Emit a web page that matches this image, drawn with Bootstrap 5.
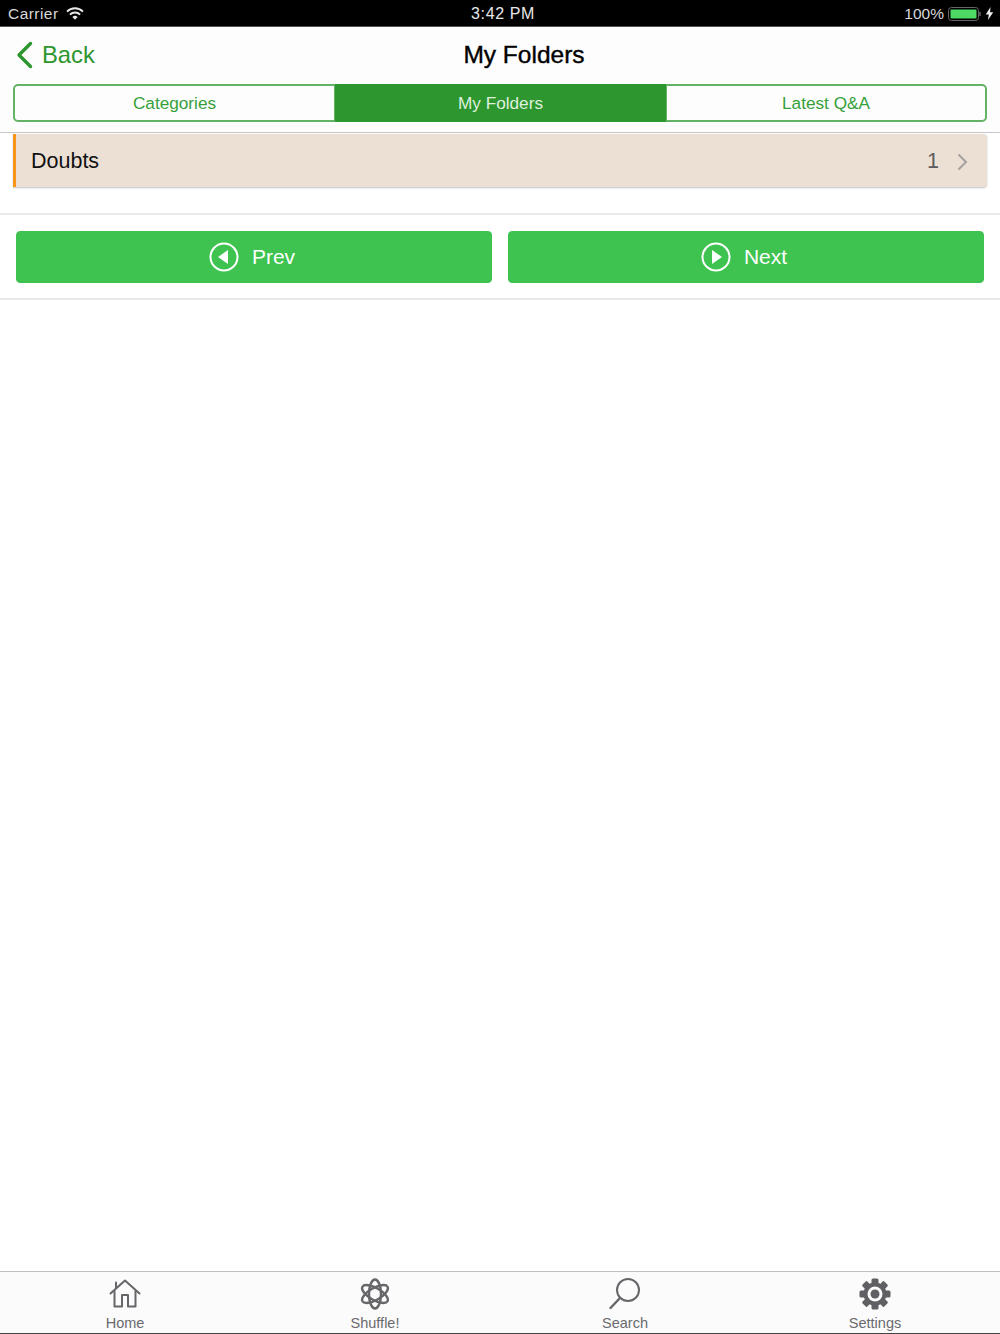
<!DOCTYPE html>
<html lang="en">
<head>
    <meta charset="UTF-8">
    <meta name="viewport" content="width=device-width, initial-scale=1.0">
    <title>My Folders</title>
    <link href="https://cdn.jsdelivr.net/npm/bootstrap@5.3.0/dist/css/bootstrap.min.css" rel="stylesheet">
    <style>
        body {
            font-family: "Liberation Sans", Arial, sans-serif;
            height: 1334px;
            background: #fff;
            overflow: hidden;
        }
        .status-bar {
            height: 27px;
            background: #000;
            color: #d8d8d8;
            font-size: 15.5px;
            padding: 1px 6px 0 8px;
            border-bottom: 1px solid #555;
        }
        .status-side { width: 300px; }
        .status-left { gap: 7px; }
        .status-carrier { letter-spacing: 0.45px; }
        .status-time { color: #e8e8e8; font-size: 16px; letter-spacing: 0.6px; margin-left: 4px; }
        .nav-head {
            height: 57px;
            background: #fdfdfd;
            padding-left: 16px;
        }
        .back-link {
            width: 190px;
            padding-bottom: 1px;
            color: #2e962f;
            font-size: 23.8px;
            text-decoration: none;
        }
        .head-title {
            width: 240px;
            margin-left: 198px;
            font-size: 24.5px;
            font-weight: 400;
            color: #000;
            -webkit-text-stroke: 0.4px #000;
        }
        .tab-wrap {
            padding: 0 13px 10px;
            height: 49px;
            background: #fdfdfd;
            border-bottom: 1px solid #c6c6cb;
        }
        .tab-group { width: 974px; height: 38px; }
        .tab-group .btn {
            --bs-btn-color: #35a03a;
            --bs-btn-border-color: #62b365;
            --bs-btn-border-width: 2px;
            --bs-btn-active-bg: #2e962f;
            --bs-btn-active-border-color: #2e962f;
            --bs-btn-active-color: #dff0df;
            --bs-btn-border-radius: 5px;
            padding-top: 8px;
            padding-bottom: 6px;
            font-size: 17.2px;
            line-height: 1;
            flex: none;
            display: flex;
            align-items: center;
            justify-content: center;
        }
        .tab-one { width: 323px; }
        .tab-two { width: 331px; }
        .tab-three { width: 322px; }
        .folder-zone {
            height: 82px;
            padding: 1px 13px 0 13px;
            border-bottom: 2px solid #e9e9ec;
        }
        .folder-row {
            height: 53px;
            background: #ece0d5;
            border-left: 3px solid #fb961a;
            border-radius: 0 4px 4px 0;
            box-shadow: 0 1px 2px #c4c0c8;
            padding: 2px 19px 0 15px;
            font-size: 21.5px;
            color: #111;
        }
        .folder-count { color: #5c5c60; margin-right: 18px; }
        .pager {
            height: 85px;
            padding: 16px 16px 0;
            gap: 16px;
            border-bottom: 2px solid #e9e9ec;
        }
        .pager .btn {
            --bs-btn-bg: #3ec350;
            --bs-btn-border-color: #3ec350;
            --bs-btn-color: #fff;
            --bs-btn-border-radius: 4px;
            height: 52px;
            flex: 1 1 0;
            padding-right: 16px;
            font-size: 21px;
            gap: 13px;
        }
        .tab-bar {
            height: 63px;
            background: #fbfbfb;
            border-top: 1px solid #bdbdc0;
            border-bottom: 1px solid #444;
        }
        .tab-item {
            width: 250px;
            color: #6a6a6e;
            font-size: 14.5px;
            line-height: 1;
            text-decoration: none;
        }
        .tab-item svg { display: block; margin-top: 6px; margin-bottom: 6px; }
    </style>
</head>
<body class="d-flex flex-column">
    <!-- status bar -->
    <div class="status-bar d-flex justify-content-between align-items-center">
        <div class="status-side status-left d-flex align-items-center">
            <span class="status-carrier">Carrier</span>
            <svg width="18" height="13" viewBox="0 0 18 13">
                <path d="M1 4.6a11.5 11.5 0 0 1 16 0" fill="none" stroke="#e8e8e8" stroke-width="2"/>
                <path d="M3.9 7.6a7.3 7.3 0 0 1 10.2 0" fill="none" stroke="#e8e8e8" stroke-width="2"/>
                <path d="M6.4 10a3.6 3.6 0 0 1 5.2 0L9 12.8z" fill="#e8e8e8"/>
            </svg>
        </div>
        <span class="status-time">3:42 PM</span>
        <div class="status-side d-flex align-items-center justify-content-end gap-1">
            <span>100%</span>
            <svg width="33" height="14" viewBox="0 0 33 14">
                <rect x="0.5" y="0.5" width="30" height="13" rx="3" fill="none" stroke="#666"/>
                <rect x="2.5" y="2.5" width="26" height="9" rx="1" fill="#4cd964"/>
                <path d="M32 5v4" stroke="#666" stroke-width="1.5"/>
            </svg>
            <svg width="9" height="13" viewBox="0 0 9 13"><path d="M5.5 0 0.8 7.4h3L3 13l5.2-7.8h-3.100z" fill="#eee"/></svg>
        </div>
    </div>

    <!-- nav -->
    <div class="nav-head d-flex align-items-center">
        <a class="back-link d-flex align-items-center gap-2" href="#">
            <svg width="18" height="28" viewBox="0 0 18 28"><path d="M14.500 2.500 3 14 14.500 25.500" fill="none" stroke="#2e962f" stroke-width="3.400" stroke-linecap="round" stroke-linejoin="round"/></svg>
            Back
        </a>
        <div class="head-title text-center">My Folders</div>
    </div>

    <div class="tab-wrap">
        <div class="btn-group tab-group" role="group">
            <button type="button" class="btn btn-outline-success tab-one">Categories</button>
            <button type="button" class="btn btn-outline-success tab-two active">My Folders</button>
            <button type="button" class="btn btn-outline-success tab-three">Latest Q&amp;A</button>
        </div>
    </div>

    <!-- folder list -->
    <div class="folder-zone">
        <div class="folder-row d-flex align-items-center">
            <span class="flex-grow-1">Doubts</span>
            <span class="folder-count">1</span>
            <svg width="11" height="18" viewBox="0 0 11 18"><path d="M1.500 1.500 9 9l-7.500 7.500" fill="none" stroke="#a3a09e" stroke-width="2"/></svg>
        </div>
    </div>

    <div class="pager d-flex">
        <button type="button" class="btn d-flex align-items-center justify-content-center">
            <svg width="30" height="30" viewBox="0 0 30 30"><circle cx="15" cy="15" r="13.500" fill="none" stroke="#fff" stroke-width="2"/><path d="M19 8v14L9 15z" fill="#fff"/></svg>
            Prev
        </button>
        <button type="button" class="btn d-flex align-items-center justify-content-center">
            <svg width="30" height="30" viewBox="0 0 30 30"><circle cx="15" cy="15" r="13.500" fill="none" stroke="#fff" stroke-width="2"/><path d="M11 8v14l10-7z" fill="#fff"/></svg>
            Next
        </button>
    </div>

    <div class="flex-grow-1"></div>

    <!-- bottom tabs -->
    <div class="tab-bar d-flex">
        <a class="tab-item d-flex flex-column align-items-center" href="#">
            <svg width="32" height="32" viewBox="0 0 32 32" fill="none" stroke="#66666a" stroke-width="2" stroke-linecap="round" stroke-linejoin="round">
                <path d="M1.500 15.500 16 2.500l14.500 13M7 4.500v5"/>
                <path d="M5.500 13v15.500h7.500V17h6v11.500h7.500V13"/>
            </svg>
            Home
        </a>
        <a class="tab-item d-flex flex-column align-items-center" href="#">
            <svg width="32" height="32" viewBox="0 0 32 32" fill="none" stroke="#66666a" stroke-width="2.400">
                <ellipse cx="16" cy="16" rx="6" ry="14.500"/>
                <ellipse cx="16" cy="16" rx="6" ry="14.500" transform="rotate(60 16 16)"/>
                <ellipse cx="16" cy="16" rx="6" ry="14.500" transform="rotate(-60 16 16)"/>
            </svg>
            Shuffle!
        </a>
        <a class="tab-item d-flex flex-column align-items-center" href="#">
            <svg width="32" height="32" viewBox="0 0 32 32" fill="none" stroke="#66666a" stroke-width="2" stroke-linecap="round">
                <circle cx="19" cy="12" r="11"/>
                <path d="M11 20 1.500 30" stroke-width="2.400"/>
            </svg>
            Search
        </a>
        <a class="tab-item d-flex flex-column align-items-center" href="#">
            <svg width="32" height="32" viewBox="0 0 32 32">
                <g fill="#5f5f64">
                    <rect x="12.500" y="0.500" width="7" height="31" rx="1.500"/>
                    <rect x="12.500" y="0.500" width="7" height="31" rx="1.500" transform="rotate(45 16 16)"/>
                    <rect x="12.500" y="0.500" width="7" height="31" rx="1.500" transform="rotate(90 16 16)"/>
                    <rect x="12.500" y="0.500" width="7" height="31" rx="1.500" transform="rotate(135 16 16)"/>
                    <circle cx="16" cy="16" r="11.500"/>
                </g>
                <circle cx="16" cy="16" r="7.500" fill="#fbfbfb"/>
                <circle cx="16" cy="16" r="4.500" fill="#5f5f64"/>
            </svg>
            Settings
        </a>
    </div>

    <script src="https://cdn.jsdelivr.net/npm/bootstrap@5.3.0/dist/js/bootstrap.bundle.min.js"></script>
</body>
</html>
